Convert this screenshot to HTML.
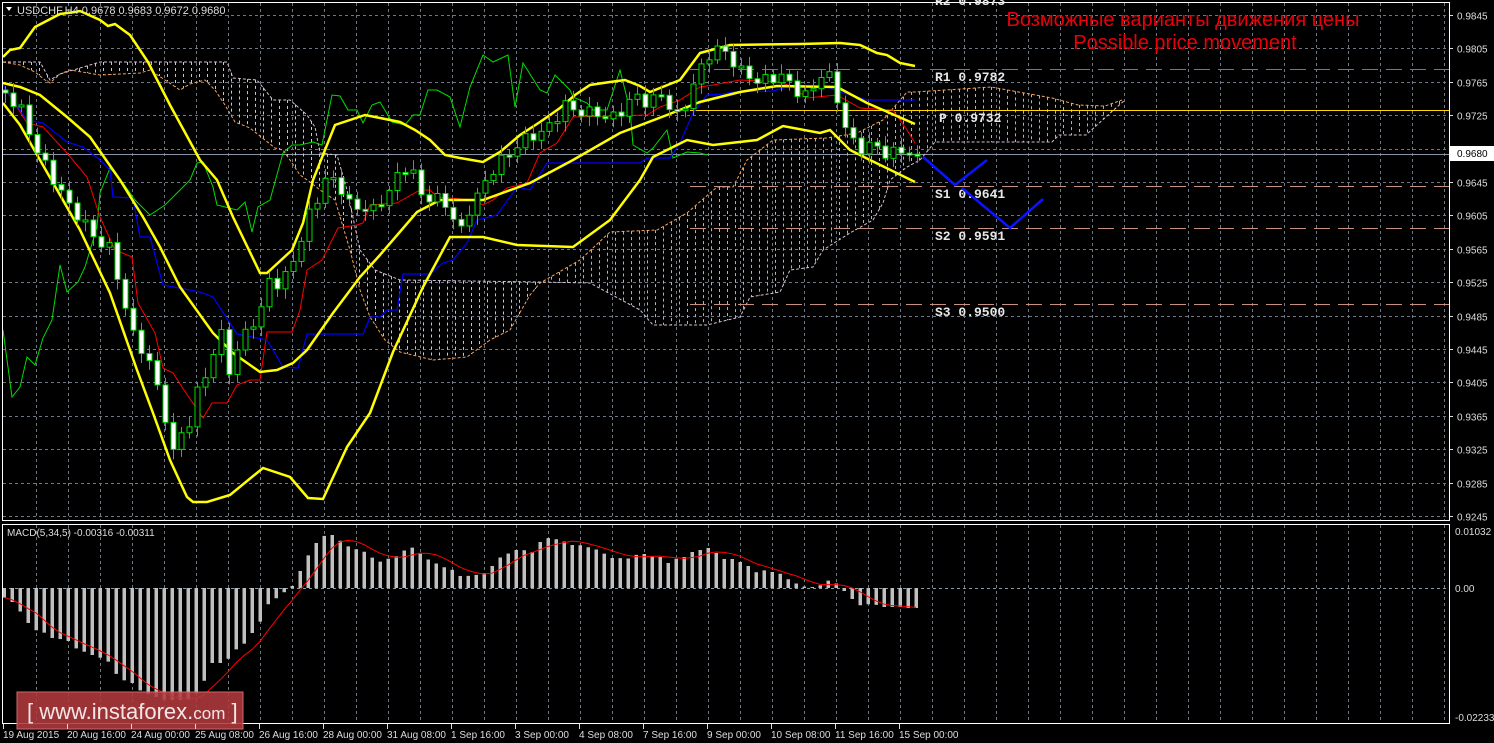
<!DOCTYPE html>
<html><head><meta charset="utf-8">
<style>
html,body{margin:0;padding:0;background:#000;overflow:hidden}
svg{display:block;font-family:"Liberation Sans",sans-serif}
</style></head>
<body>
<svg id="s" width="1494" height="743" xmlns="http://www.w3.org/2000/svg">
<rect width="1494" height="743" fill="#000"/>
<g id="grid"></g>
<g id="cloud"></g>
<g id="lvl"></g>
<g id="lines"></g>
<g id="candles"></g>
<g id="macd"></g>
<rect x="2.5" y="2.5" width="1447" height="518" fill="none" stroke="#fff" stroke-width="1"/>
<rect x="2.5" y="524.5" width="1447" height="199" fill="none" stroke="#fff" stroke-width="1"/>
<polygon points="6,7 12,7 9,11" fill="#fff"/>
<text x="17" y="14" font-size="11" fill="#ddd">USDCHF,H4  0.9678 0.9683 0.9672 0.9680</text>
<text x="7" y="536" font-size="10" fill="#ddd">MACD(5,34,5) -0.00316 -0.00311</text>
<text x="1183" y="26" font-size="20" fill="#e8000b" text-anchor="middle">Возможные варианты движения цены</text>
<text x="1185" y="49" font-size="20" fill="#e8000b" text-anchor="middle">Possible price movement</text>
<g style="font-family:'Liberation Mono',monospace" font-size="13" fill="#e8e8e8" font-weight="bold">
<text x="935" y="5">R2 0.9873</text>
<text x="935" y="81">R1 0.9782</text>
<text x="939" y="122">P 0.9732</text>
<text x="935" y="198">S1 0.9641</text>
<text x="935" y="240">S2 0.9591</text>
<text x="935" y="316">S3 0.9500</text>
</g>
<polyline points="923,157 955,185 987,160" fill="none" stroke="#0a14ff" stroke-width="2.5"/>
<polyline points="962,188 1010,228 1043,199" fill="none" stroke="#0a14ff" stroke-width="2.5"/>
<g id="axis" font-size="10" fill="#ddd"></g>
<rect x="1450" y="146" width="44" height="15" fill="#fff"/>
<text x="1457" y="157" font-size="10" fill="#000">0.9680</text>
<rect x="17" y="692" width="226" height="37" fill="#b03a3e" fill-opacity="0.88" stroke="#c86a6d"/>
<text x="27" y="719" font-size="22" fill="#f4e6e6">[  www.instaforex.<tspan font-size="17">com</tspan> ]</text>
<g id="time" font-size="10" fill="#ddd"></g>
</svg>
<script>
(function(){
var NS="http://www.w3.org/2000/svg";
function el(p,t,a){var e=document.createElementNS(NS,t);for(var k in a)e.setAttribute(k,a[k]);document.getElementById(p).appendChild(e);return e;}
function interp(pts,x){if(x<=pts[0][0])return pts[0][1];for(var i=1;i<pts.length;i++){if(x<=pts[i][0]){var a=pts[i-1],b=pts[i];return a[1]+(b[1]-a[1])*(x-a[0])/(b[0]-a[0]);}}return pts[pts.length-1][1];}
function pl(g,pts,c,w,d){var a={points:pts.map(function(p){return p.join(",")}).join(" "),fill:"none",stroke:c,"stroke-width":w};if(d)a["stroke-dasharray"]=d;el(g,"polyline",a);}
var gc="#6c7888";
for(var x=36;x<1449;x+=32){el("grid","line",{x1:x+0.5,y1:3,x2:x+0.5,y2:520,stroke:gc,"stroke-dasharray":"3,3"});el("grid","line",{x1:x+0.5,y1:525,x2:x+0.5,y2:723,stroke:gc,"stroke-dasharray":"3,3"});}
var prices=["0.9845","0.9805","0.9765","0.9725","0.9685","0.9645","0.9605","0.9565","0.9525","0.9485","0.9445","0.9405","0.9365","0.9325","0.9285","0.9245"];
for(var i=0;i<16;i++){var y=Math.round(15+i*33.4)+0.5;el("grid","line",{x1:3,y1:y,x2:1449,y2:y,stroke:gc,"stroke-dasharray":"3,3"});
 if(i!=4){var t=el("axis","text",{x:1457,y:y+4});t.textContent=prices[i];}
 el("axis","line",{x1:1450,y1:y,x2:1453,y2:y,stroke:"#ddd"});}
el("grid","line",{x1:3,y1:588.5,x2:1449,y2:588.5,stroke:"#8899aa","stroke-dasharray":"3,3"});
el("grid","line",{x1:3,y1:154.5,x2:1449,y2:154.5,stroke:"#8a96a6"});
[["0.01032",535],["0.00",592],["-0.02233",721]].forEach(function(a){var t=el("axis","text",{x:1455,y:a[1]});t.textContent=a[0];});
var tl=["19 Aug 2015","20 Aug 16:00","24 Aug 00:00","25 Aug 08:00","26 Aug 16:00","28 Aug 00:00","31 Aug 08:00","1 Sep 16:00","3 Sep 00:00","4 Sep 08:00","7 Sep 16:00","9 Sep 00:00","10 Sep 08:00","11 Sep 16:00","15 Sep 00:00"];
for(var i=0;i<tl.length;i++){var x=3+i*64;var t=el("time","text",{x:x,y:738});t.textContent=tl[i];el("time","line",{x1:x+0.5,y1:724,x2:x+0.5,y2:729,stroke:"#ddd"});}
var A=[[3,62],[20,65],[35,72],[45,80],[50,83],[60,74],[70,70],[100,75],[140,73],[150,70],[165,80],[180,90],[190,84],[205,80],[215,90],[225,105],[235,122],[250,128],[265,140],[275,148],[283,150],[290,160],[300,175],[310,182],[320,190],[335,200],[350,250],[360,290],[370,317],[385,340],[400,352],[433,360],[467,357],[490,340],[510,330],[530,295],[540,283],[580,260],[610,232],[657,230],[687,213],[717,187],[733,187],[747,160],[773,140],[827,138],[857,133],[883,120],[907,92],[915,92],[991,87],[1052,98],[1078,105],[1105,106],[1122,100]];
var B=[[3,62],[40,62],[50,80],[60,74],[100,62],[227,62],[233,78],[257,80],[273,100],[290,100],[307,115],[315,127],[320,153],[337,155],[347,190],[360,250],[375,270],[400,280],[540,282],[590,283],[640,310],[653,325],[707,325],[740,317],[750,297],[780,292],[790,270],[813,267],[823,250],[850,233],[873,220],[883,203],[890,180],[907,167],[920,160],[935,142],[1052,142],[1059,135],[1086,135],[1108,115],[1125,100]];
for(var x=7;x<1122;x+=8){var a=interp(A,x),b=interp(B,x);if(Math.abs(a-b)<3)continue;el("cloud","line",{x1:x+0.5,y1:Math.min(a,b),x2:x+0.5,y2:Math.max(a,b),stroke:(a<b)?"#f4a460":"#d8bfd8","stroke-dasharray":"3,3"});}
pl("cloud",A,"#f4a460",1,"3,2");pl("cloud",B,"#d8bfd8",1,"3,2");
el("lvl","line",{x1:690,y1:69.5,x2:1449,y2:69.5,stroke:"#e0542a","stroke-dasharray":"16,8"});
el("lvl","line",{x1:690,y1:110.5,x2:1449,y2:110.5,stroke:"#ffd700"});
[186,228,304].forEach(function(y){el("lvl","line",{x1:690,y1:y+0.5,x2:1449,y2:y+0.5,stroke:"#c8907e","stroke-dasharray":"16,8"});});
var green=[[3,330],[12,397],[20,387],[27,357],[35,365],[43,338],[52,320],[60,265],[67,292],[78,282],[85,267],[97,227],[100,193],[110,168],[123,183],[135,200],[150,215],[165,205],[180,190],[190,180],[197,163],[203,162],[213,187],[217,205],[237,210],[245,202],[252,232],[258,207],[270,200],[283,153],[292,145],[300,145],[313,142],[322,145],[332,95],[340,96],[348,110],[357,110],[363,123],[372,105],[380,102],[392,122],[405,125],[413,115],[420,115],[428,90],[437,90],[450,97],[460,127],[470,87],[483,55],[493,62],[508,55],[515,107],[523,63],[540,90],[547,93],[555,75],[570,90],[573,97],[587,103],[593,110],[607,110],[620,70],[630,110],[633,145],[647,153],[653,148],[667,130],[673,158],[687,152],[700,153],[707,155]];
pl("lines",green,"#00dd00",1);
var red=[[3,85],[17,107],[27,123],[43,127],[67,153],[87,177],[100,217],[115,250],[132,257],[138,303],[155,333],[163,368],[173,373],[182,387],[203,418],[212,403],[227,403],[237,385],[250,380],[260,380],[267,332],[292,332],[300,310],[307,270],[322,260],[338,228],[357,225],[363,223],[370,205],[397,203],[420,190],[430,190],[437,197],[473,200],[483,205],[493,200],[507,188],[527,183],[540,153],[557,143],[573,117],[647,115],[660,107],[680,100],[700,87],[713,85],[740,80],[780,82],[793,87],[807,98],[837,95],[860,108],[893,110],[907,130],[915,143]];
pl("lines",red,"#ff0000",1);
var blue=[[3,85],[20,110],[27,120],[43,123],[67,142],[83,147],[100,160],[110,170],[113,197],[133,198],[140,237],[150,237],[163,285],[200,292],[213,297],[237,334],[267,340],[283,367],[298,368],[307,334],[363,334],[370,317],[380,317],[387,310],[397,310],[403,274],[430,274],[443,263],[453,260],[467,243],[477,220],[497,215],[517,187],[530,190],[547,163],[640,163],[647,158],[670,158],[680,143],[693,113],[707,95],[723,94],[733,92],[773,91],[787,87],[827,87],[840,92],[867,100],[915,100]];
pl("lines",blue,"#0000ff",1.2);
var up=[[3,57],[10,50],[20,48],[35,27],[60,14],[75,12],[80,11],[100,20],[108,26],[115,24],[130,35],[148,62],[170,105],[200,160],[217,180],[233,217],[260,273],[267,273],[292,250],[303,223],[313,180],[325,150],[335,125],[365,115],[375,117],[400,122],[415,130],[430,140],[445,155],[460,158],[483,162],[500,152],[520,135],[540,122],[560,108],[575,95],[590,85],[610,82],[625,80],[640,86],[650,92],[680,80],[700,53],[730,45],[800,44],[840,43],[860,45],[877,53],[887,55],[900,63],[915,66]];
var mid=[[3,83],[20,87],[40,95],[67,117],[90,137],[120,180],[143,217],[160,247],[180,287],[213,333],[233,353],[260,372],[277,370],[293,363],[307,350],[333,313],[360,277],[380,255],[417,212],[440,200],[483,200],[530,183],[573,160],[620,133],[667,115],[700,102],[740,92],[777,86],[837,87],[867,103],[915,124]];
var lo=[[3,103],[20,125],[40,160],[60,195],[80,230],[110,293],[137,370],[153,413],[170,460],[187,497],[193,502],[207,502],[230,495],[263,468],[290,477],[308,498],[323,499],[347,447],[370,413],[393,352],[423,287],[450,237],[483,237],[517,245],[573,247],[610,220],[640,180],[653,157],[687,140],[713,145],[757,140],[783,126],[820,133],[830,130],[850,150],[870,160],[915,182]];
[up,mid,lo].forEach(function(p){pl("lines",p,"#ffff00",2.5);});
var cp=[[5,90],[20,110],[35,150],[50,170],[70,210],[90,230],[110,250],[120,290],[130,330],[145,350],[155,380],[165,420],[172,460],[180,430],[190,420],[200,380],[210,370],[220,330],[230,370],[245,330],[260,320],[270,270],[280,290],[290,260],[300,250],[310,210],[320,190],[330,170],[340,190],[350,210],[360,205],[370,210],[380,200],[390,195],[400,170],[410,165],[420,190],[430,200],[445,205],[460,230],[470,205],[480,195],[490,175],[500,160],[515,145],[530,140],[545,130],[555,115],[565,105],[575,115],[590,112],[600,110],[610,120],[620,115],[635,95],[650,100],[660,95],[670,110],[680,120],[690,85],[700,70],[710,55],[720,50],[735,60],[745,75],[760,85],[770,80],[780,70],[790,85],[800,95],[810,100],[820,70],[830,75],[840,110],[850,145],[860,150],[870,140],[880,150],[890,155],[900,153],[915,155]];
var prev=interp(cp,0);
for(var i=0;i<115;i++){var x=5+i*8;if(x>917)break;var c=interp(cp,x)+6*Math.sin(i*2.3)+3*Math.cos(i*1.1);if(x>900)c=interp(cp,x);
 var o=prev;prev=c;var tp=Math.min(o,c),bt=Math.max(o,c);if(bt-tp<2){bt=tp+2;}
 var hw=4+6*Math.abs(Math.sin(i*1.7)),lw=4+6*Math.abs(Math.cos(i*0.9));
 el("candles","line",{x1:x+0.5,y1:tp-hw,x2:x+0.5,y2:bt+lw,stroke:"#00dd00"});
 el("candles","rect",{x:x-2,y:tp,width:5,height:bt-tp,fill:(c>o)?"#fff":"#000",stroke:"#00dd00","stroke-width":1});}
var mh=[[3,597],[12,602],[19,610],[27,622],[35,630],[43,632],[52,638],[67,640],[75,648],[92,655],[107,660],[115,673],[123,680],[132,683],[139,690],[150,695],[165,700],[187,700],[195,695],[203,683],[212,663],[220,663],[227,660],[235,650],[243,645],[252,633],[259,624],[267,605],[275,599],[283,593],[292,586],[299,573],[307,557],[315,544],[323,536],[332,535],[339,540],[347,546],[355,549],[363,551],[371,557],[379,562],[387,559],[395,557],[403,551],[411,547],[419,552],[427,559],[435,563],[443,567],[451,569],[459,576],[467,576],[475,575],[483,574],[492,566],[499,558],[507,554],[516,550],[523,550],[532,552],[540,542],[547,538],[555,539],[563,541],[571,545],[579,545],[587,547],[595,549],[603,553],[611,558],[619,558],[627,559],[635,555],[644,554],[651,556],[660,557],[668,563],[675,559],[684,557],[692,552],[700,550],[708,548],[716,553],[724,559],[732,559],[740,562],[748,566],[757,573],[765,570],[772,572],[781,574],[789,580],[797,584],[805,587],[813,587],[821,585],[829,580],[837,584],[845,592],[853,600],[861,606],[869,604],[877,605],[884,607],[893,607],[900,607],[908,608],[917,608]];
var vals=[],sig=[];
for(var i=0;i<115;i++){var x=4+i*8;if(x>917)break;var y=interp(mh,x);vals.push([x,y]);
 el("macd","rect",{x:x-1.5,y:Math.min(y,588),width:3.5,height:Math.max(1,Math.abs(y-588)),fill:"#c0c0c0"});}
for(var i=0;i<vals.length;i++){var s=0,n=0;for(var j=Math.max(0,i-4);j<=i;j++){s+=vals[j][1];n++;}sig.push([vals[i][0],s/n]);}
pl("macd",sig,"#ff0000",1);
})();
</script>
</body></html>
